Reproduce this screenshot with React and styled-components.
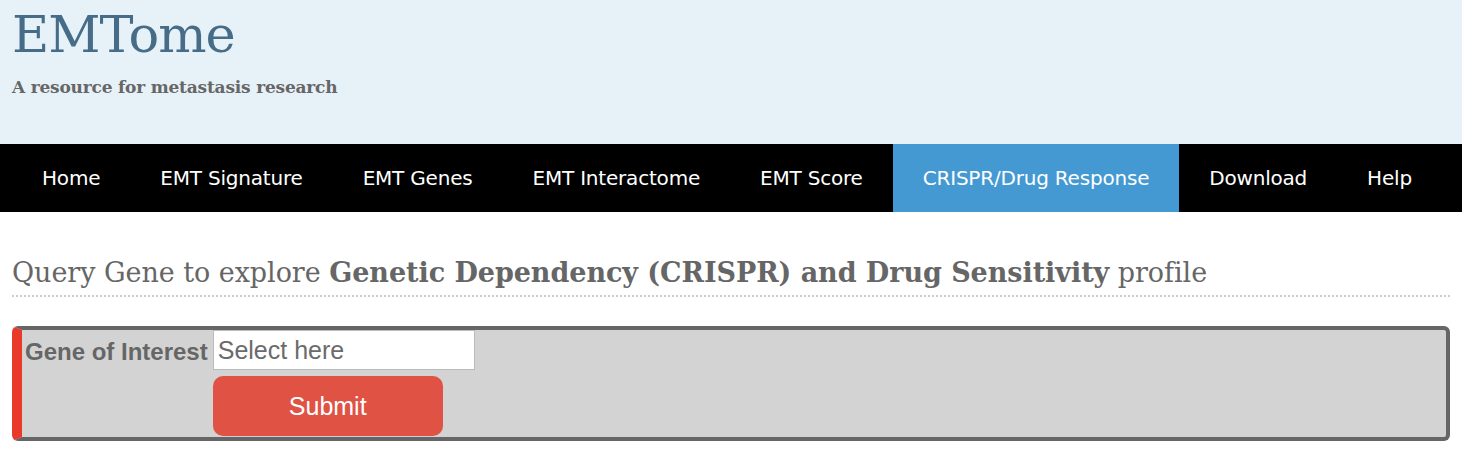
import React from 'react'
import styled, { createGlobalStyle } from 'styled-components'

const GlobalStyle = createGlobalStyle`
  body {
    margin: 0;
    background: #ffffff;
    font-family: "Liberation Sans", Arial, sans-serif;
  }
`

const Header = styled.header`
  background: #e6f1f8;
  height: 144px;
  padding: 0 12px;
  box-sizing: border-box;
`

const Title = styled.h1`
  margin: 0;
  padding-top: 2px;
  font-family: "DejaVu Serif", Georgia, serif;
  font-weight: normal;
  font-size: 51px;
  line-height: 66px;
  color: #466c87;
  letter-spacing: -1px;
`

const Tagline = styled.div`
  margin-top: 9px;
  font-family: "DejaVu Serif", Georgia, serif;
  font-weight: bold;
  font-size: 17px;
  color: #666666;
  letter-spacing: -0.2px;
`

const Nav = styled.nav`
  background: #000000;
  height: 68px;
  display: flex;
  padding-left: 12px;
`

const NavItem = styled.a`
  display: flex;
  align-items: center;
  padding: 0 30px;
  color: #ffffff;
  font-family: "DejaVu Sans", Tahoma, sans-serif;
  font-size: 20px;
  letter-spacing: -0.2px;
  text-decoration: none;
  background: ${(props) => (props.active ? '#4499d3' : 'transparent')};
`

const Main = styled.main`
  padding: 0 12px;
`

const Heading = styled.h2`
  margin: 44px 0 0;
  padding-bottom: 5px;
  font-family: "DejaVu Serif", Georgia, serif;
  font-weight: normal;
  font-size: 27px;
  line-height: 34px;
  letter-spacing: -0.05px;
  color: #666666;
  border-bottom: 2px dotted #cccccc;
  b {
    font-weight: bold;
  }
`

const QueryBox = styled.form`
  margin-top: 29px;
  background: #d3d3d3;
  border: 4px solid #666666;
  border-left: 10px solid #e8392a;
  border-radius: 6px;
  display: grid;
  grid-template-columns: auto auto 1fr;
  column-gap: 5px;
  row-gap: 6px;
  padding: 0 3px 1px;
`

const Label = styled.label`
  align-self: start;
  font-weight: bold;
  font-size: 24px;
  color: #666666;
  padding-top: 8px;
`

const Input = styled.input`
  width: 262px;
  height: 40px;
  box-sizing: border-box;
  border: 1px solid #bbbbbb;
  outline: 1px solid #ffffff;
  outline-offset: -2px;
  font-family: "Liberation Sans", Arial, sans-serif;
  font-size: 25px;
  padding: 0 4px;
  &::placeholder {
    color: #6b6b6b;
  }
`

const Submit = styled.button`
  grid-column: 2;
  width: 230px;
  height: 60px;
  border: none;
  border-radius: 10px;
  background: #e05243;
  color: #ffffff;
  font-family: "Liberation Sans", Arial, sans-serif;
  font-size: 25px;
  cursor: pointer;
`

const links = [
  'Home',
  'EMT Signature',
  'EMT Genes',
  'EMT Interactome',
  'EMT Score',
  'CRISPR/Drug Response',
  'Download',
  'Help'
]

export default function App() {
  return (
    <>
      <GlobalStyle />
      <Header>
        <Title>EMTome</Title>
        <Tagline>A resource for metastasis research</Tagline>
      </Header>
      <Nav>
        {links.map((l) => (
          <NavItem key={l} href="#" active={l === 'CRISPR/Drug Response' ? 1 : 0}>
            {l}
          </NavItem>
        ))}
      </Nav>
      <Main>
        <Heading>
          Query Gene to explore <b>Genetic Dependency (CRISPR) and Drug Sensitivity</b> profile
        </Heading>
        <QueryBox onSubmit={(e) => e.preventDefault()}>
          <Label>Gene of Interest</Label>
          <Input placeholder="Select here" />
          <span />
          <Submit type="submit">Submit</Submit>
        </QueryBox>
      </Main>
    </>
  )
}
